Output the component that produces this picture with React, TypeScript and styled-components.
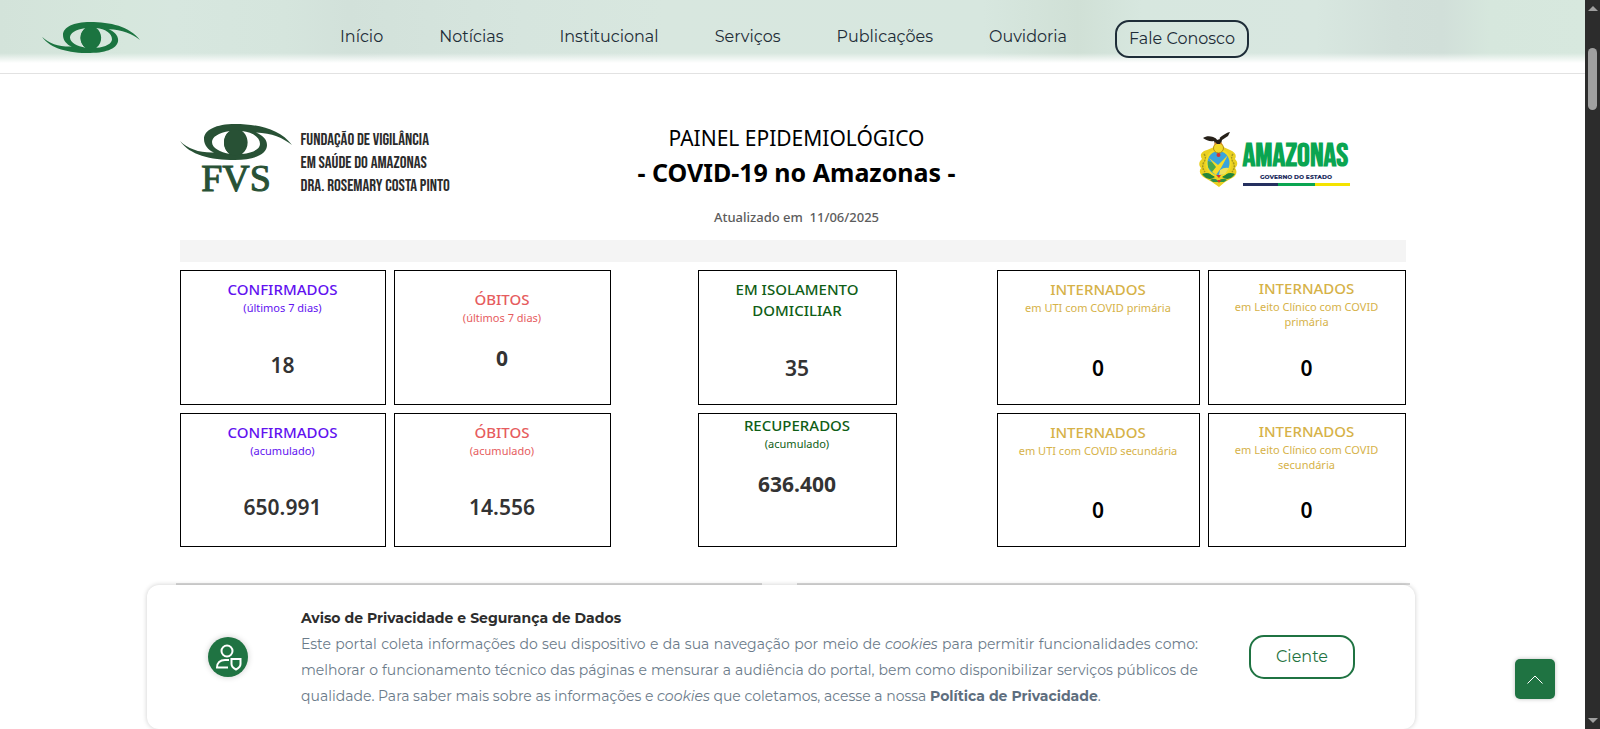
import React from "react";
import styled, { createGlobalStyle } from "styled-components";

const GlobalStyle = createGlobalStyle`
  *, *::before, *::after { box-sizing: border-box; }
  html, body { margin: 0; padding: 0; }
  body {
    background: #fff;
    font-family: Montserrat, Inter, sans-serif;
    overflow: hidden;
  }
  h1, h2, h3, p, ul { margin: 0; padding: 0; }
`;

const PANEL_FONT = '"Noto Sans", "Open Sans", sans-serif';
const NARROW_FONT = '"Bebas Neue", Oswald, "Roboto Condensed", "Liberation Sans Narrow", sans-serif';

const Screen = styled.div`
  display: flex;
  height: 100vh;
`;

const Page = styled.div`
  flex: 1;
  min-width: 0;
  position: relative;
  overflow: hidden;
`;

const TopBar = styled.header`
  display: flex;
  align-items: flex-start;
  height: 74px;
  padding: 0 42px;
  border-bottom: 1px solid #e2e2e2;
  background:
    linear-gradient(to bottom, transparent 53px, #fff 63px),
    linear-gradient(
      to right,
      #d3e3da 0,
      #d6e7dd 8%,
      #d7e7df 11%,
      #d5e5dd 18%,
      #d2e1da 22%,
      #d4e3dc 27%,
      #d6e5de 33%,
      #d8e7df 42%,
      #d7e7df 62%,
      #d0e0d6 68%,
      #d7e7df 72%,
      #d8e7e0 83%,
      #d2e0da 88%,
      #d1dfd9 91%,
      #d6e7dd 94%,
      #d7e8de 100%
    );
`;

const LogoLink = styled.a`
  display: block;
  margin-top: 22px;
  color: #1b7440;
  svg { display: block; }
`;

const Nav = styled.nav`
  margin-left: 200px;
`;

const NavList = styled.ul`
  display: flex;
  list-style: none;
  gap: 56px;
  margin-top: 20px;
`;

const NavLink = styled.a`
  display: block;
  color: #1e2d38;
  font-size: 16px;
  font-weight: 400;
  line-height: 34px;
  text-decoration: none;
  white-space: nowrap;
`;

const ContactLink = styled(NavLink)`
  margin-left: -8px;
  padding: 0 12px;
  border: 2px solid #1e2d38;
  border-radius: 14px;
`;

const Dashboard = styled.main`
  width: 1226px;
  max-width: calc(100% - 32px);
  margin: 0 auto;
`;

const PanelHeader = styled.div`
  display: grid;
  grid-template-columns: 1fr auto 1fr;
  align-items: start;
  height: 166px;
  padding-top: 50px;
`;

const Institution = styled.div`
  display: flex;
  gap: 9px;
`;

const InstitutionName = styled.p`
  margin-top: 5px;
  font-family: ${NARROW_FONT};
  font-size: 17px;
  line-height: 23px;
  color: #2b2b2b;
  white-space: nowrap;
`;

const Heading = styled.div`
  padding-left: 8px;
`;

const Title = styled.h1`
  text-align: center;
  font-family: ${PANEL_FONT};
  font-size: 25px;
  font-weight: 700;
  line-height: 38px;
  color: #000;
  white-space: nowrap;
`;

const Overline = styled.p`
  text-align: center;
  font-family: ${PANEL_FONT};
  font-size: 21px;
  line-height: 29px;
  color: #000;
`;

const Updated = styled.p`
  margin-top: 16px;
  text-align: center;
  font-family: ${PANEL_FONT};
  font-size: 13px;
  font-weight: 500;
  line-height: 20px;
  color: #5c5c5c;
  white-space: pre;
`;

const State = styled.div`
  display: flex;
  justify-self: end;
  gap: 5px;
  margin: 8px 56px 0 0;
`;

const StateText = styled.div`
  width: 107px;
  margin-top: 10px;
`;

const StateName = styled.p`
  font-family: ${NARROW_FONT};
  font-size: 32px;
  font-weight: 700;
  line-height: 30px;
  color: #0aa551;
`;

const StateLabel = styled.p`
  text-align: center;
  font-size: 6px;
  font-weight: 800;
  line-height: 10px;
  color: #25305f;
  white-space: nowrap;
`;

const StateStripe = styled.div`
  height: 3px;
  margin-top: 1px;
  background: linear-gradient(to right, #25305f 0 33%, #0aa551 33% 67%, #f4e300 67%);
`;

const Divider = styled.div`
  height: 22px;
  background: #f4f4f4;
`;

const Cards = styled.section`
  display: grid;
  grid-template-columns: 206fr 217fr 71fr 199fr 84fr 203fr 198fr;
  grid-template-rows: 135px 134px;
  gap: 8px;
  margin-top: 8px;
`;

const Card = styled.article<{ $column: number; $top: number; $bottom: number }>`
  grid-column: ${(p) => p.$column};
  display: flex;
  flex-direction: column;
  padding: ${(p) => p.$top}px 8px ${(p) => p.$bottom}px;
  border: 1px solid #000;
  font-family: ${PANEL_FONT};
  text-align: center;
`;

const CardTitle = styled.h2<{ $color: string }>`
  padding: 0 24px;
  font-size: 15px;
  font-weight: 500;
  line-height: 21px;
  color: ${(p) => p.$color};
`;

const CardNote = styled.p<{ $color: string }>`
  font-size: 11px;
  font-weight: 400;
  line-height: 15px;
  color: ${(p) => p.$color};
`;

const CardValue = styled.p<{ $color: string; $weight: number }>`
  margin-top: auto;
  font-size: 21px;
  font-weight: ${(p) => p.$weight};
  line-height: 30px;
  color: ${(p) => p.$color};
`;

const Charts = styled.section`
  display: grid;
  grid-template-columns: 586fr 613fr;
  gap: 35px;
  margin: 36px -4px 0;
`;

const ChartPanel = styled.div`
  height: 200px;
  border-top: 2px solid #d8d8d8;
`;

const Notice = styled.section`
  position: absolute;
  left: 147px;
  bottom: 0;
  width: 80%;
  height: 144px;
  display: flex;
  align-items: center;
  padding: 0 60px 0 61px;
  border-radius: 12px;
  background: #fff;
  box-shadow: 0 0 5px rgba(0, 0, 0, 0.2);
`;

const NoticeIcon = styled.div`
  flex: none;
  width: 40px;
  height: 40px;
  display: flex;
  align-items: center;
  justify-content: center;
  border-radius: 50%;
  background: #1f7342;
  box-shadow: 0 0 6px rgba(0, 0, 0, 0.2);
`;

const NoticeBody = styled.div`
  flex: 1;
  margin: 0 51px 0 53px;
`;

const NoticeTitle = styled.h3`
  font-size: 14px;
  font-weight: 700;
  line-height: 26px;
  color: #2d2d2d;
`;

const NoticeText = styled.p`
  font-size: 14px;
  font-weight: 400;
  line-height: 26px;
  text-align: justify;
  color: #6b7b8a;
  a { color: #5e6e7e; font-weight: 700; text-decoration: none; }
`;

const Accept = styled.button`
  flex: none;
  width: 106px;
  height: 44px;
  padding: 0 0 2px;
  border: 2px solid #1f7342;
  border-radius: 15px;
  background: #fff;
  color: #1f7342;
  font: 400 16px Montserrat, Inter, sans-serif;
`;

const BackToTop = styled.button`
  position: absolute;
  right: 30px;
  bottom: 30px;
  width: 40px;
  height: 40px;
  padding: 0;
  display: flex;
  align-items: center;
  justify-content: center;
  border: 0;
  border-radius: 5px;
  background: #1f7342;
  box-shadow: 0 0 4px rgba(0, 0, 0, 0.25);
`;

const ScrollTrack = styled.div`
  flex: none;
  width: 15px;
  display: flex;
  flex-direction: column;
  align-items: center;
  padding: 6px 0;
  background: #2c2c2c;
`;

const ScrollThumb = styled.div`
  width: 9px;
  height: 62px;
  margin-top: 37px;
  border-radius: 5px;
  background: #9f9f9f;
`;

const ScrollArrow = styled.span<{ $down?: boolean }>`
  border: 5px solid transparent;
  border-top: ${(p) => (p.$down ? "5px solid #9f9f9f" : "0")};
  border-bottom: ${(p) => (p.$down ? "0" : "5px solid #9f9f9f")};
  margin-top: ${(p) => (p.$down ? "auto" : "0")};
`;

/* The eye shape shared by both FVS logos, drawn in a 112 x 36 box. */
const EyeShape = () => (
  <>
    <path
      fillRule="evenodd"
      d="M0 17 C10 31 30 36 55 36 C75 36 87 30 87 21 C87 15 82 11 76 8.5 C92 9 103 14 112 21 C100 5 78 0 55 0 C36 0 24 6 24 15 C24 21 28 26 34 28.5 C20 29 8 25 0 17 Z M50 7 C38 9 32 13 32 18 C32 24 40 28 50 30 C42 25 42 12 50 7 Z M62 7 C72 8 80 13 80 20 C80 25 73 29 62 30 C70 24 69 12 62 7 Z"
    />
    <ellipse cx="55" cy="18.5" rx="11" ry="13" />
  </>
);

const Crest = () => (
  <svg width="39" height="56" viewBox="0 0 39 56" role="img" aria-label="Brasão do Amazonas">
    <path d="M8 18 C1 20 1 24 3 27 C-1 30 0 34 2 36 C-1 40 2 44 6 46 L13 50 L20 55 L26 50 L33 46 C37 44 39 40 36 36 C39 33 39 30 36 27 C38 23 36 20 31 18 L20 13 Z" fill="#ead022" />
    <path d="M5 22 q3 4 0 8 q-3 5 1 10 M34 22 q-3 4 0 8 q3 5 -1 10" fill="none" stroke="#a5991d" strokeWidth="1.500" strokeDasharray="2 1" />
    <path d="M3 42 q7 -3 13 3 q-7 5 -13 -3 M36 42 q-7 -3 -13 3 q7 5 13 -3" fill="#23853b" />
    <path d="M11 48 q5 -3 8 1 q5 -4 9 -1 l-3 2 -5 0 -6 0 Z" fill="#2f9146" />
    <ellipse cx="19.500" cy="31" rx="13" ry="14" fill="#f4dc22" />
    <ellipse cx="19.500" cy="31" rx="11" ry="12" fill="#3aa4dc" />
    <path d="M9 29 l6 2 3 5 -4 5 -5 -6 Z" fill="#4aa84c" />
    <path d="M10 26 L19 33 L29 23 L22 36 L17 43 L13 40 L17 35 Z" fill="#f6dc28" />
    <path d="M21 38 q4 -3 9 -2 l-4 6 -6 1 Z" fill="#f0e35c" />
    <circle cx="19.500" cy="16" r="5" fill="#f2d92a" stroke="#b39213" strokeWidth="1" />
    <circle cx="19.500" cy="23" r="2" fill="#d8322f" />
    <path d="M17 43 h5 l-2 3 Z M18 48 h4 l-2 3 Z" fill="#d8322f" />
    <path d="M4 6 C8 3 14 4 18 7 C22 6 25 1 31 0 L29 4 L26 6 L23 8 L22 12 L16 12 L15 9 C11 10 7 8 4 6 Z" fill="#262019" />
    <path d="M16 10 l-1 3 3 -1 M22 10 l2 3 -3 -1" fill="#e0902a" />
    <path d="M17 6 l3 -1 1 2 -3 1 Z" fill="#fff" />
  </svg>
);

const PURPLE = "#6212f0";
const RED = "#e65c5e";
const GREEN = "#0f5e16";
const GOLD = "#d6b248";

type CardData = {
  column: number;
  title: string;
  note?: string;
  value: string;
  color: string;
  valueColor?: string;
  weight?: number;
  top?: number;
  bottom?: number;
};

const cards: CardData[] = [
  { column: 1, title: "CONFIRMADOS", note: "(últimos 7 dias)", value: "18", color: PURPLE, bottom: 24 },
  { column: 2, title: "ÓBITOS", note: "(últimos 7 dias)", value: "0", color: RED, weight: 700, top: 18, bottom: 31 },
  { column: 4, title: "EM ISOLAMENTO DOMICILIAR", value: "35", color: GREEN },
  { column: 6, title: "INTERNADOS", note: "em UTI com COVID primária", value: "0", color: GOLD, valueColor: "#000" },
  { column: 7, title: "INTERNADOS", note: "em Leito Clínico com COVID primária", value: "0", color: GOLD, valueColor: "#000", top: 7 },
  { column: 1, title: "CONFIRMADOS", note: "(acumulado)", value: "650.991", color: PURPLE, bottom: 24 },
  { column: 2, title: "ÓBITOS", note: "(acumulado)", value: "14.556", color: RED, bottom: 24 },
  { column: 4, title: "RECUPERADOS", note: "(acumulado)", value: "636.400", color: GREEN, weight: 700, top: 1, bottom: 47 },
  { column: 6, title: "INTERNADOS", note: "em UTI com COVID secundária", value: "0", color: GOLD, valueColor: "#000" },
  { column: 7, title: "INTERNADOS", note: "em Leito Clínico com COVID secundária", value: "0", color: GOLD, valueColor: "#000", top: 7 },
];

const links = ["Início", "Notícias", "Institucional", "Serviços", "Publicações", "Ouvidoria"];

export default function App() {
  return (
    <>
      <GlobalStyle />
      <Screen>
        <Page>
          <TopBar>
            <LogoLink href="#" aria-label="FVS">
              <svg width="98" height="31" viewBox="0 0 112 36" preserveAspectRatio="none" fill="currentColor">
                <EyeShape />
              </svg>
            </LogoLink>
            <Nav>
              <NavList>
                {links.map((label) => (
                  <li key={label}>
                    <NavLink href="#">{label}</NavLink>
                  </li>
                ))}
                <li>
                  <ContactLink href="#">Fale Conosco</ContactLink>
                </li>
              </NavList>
            </Nav>
          </TopBar>

          <Dashboard>
            <PanelHeader>
              <Institution>
                <svg width="112" height="78" viewBox="0 0 112 78" fill="#285135" role="img" aria-label="FVS">
                  <EyeShape />
                  <text
                    x="56"
                    y="67"
                    textAnchor="middle"
                    fontFamily="Liberation Serif, serif"
                    fontSize="38"
                    stroke="#285135"
                    strokeWidth="1"
                  >
                    FVS
                  </text>
                </svg>
                <InstitutionName>
                  FUNDAÇÃO DE VIGILÂNCIA
                  <br />
                  EM SAÚDE DO AMAZONAS
                  <br />
                  DRA. ROSEMARY COSTA PINTO
                </InstitutionName>
              </Institution>
              <Heading>
                <Overline>PAINEL EPIDEMIOLÓGICO</Overline>
                <Title>- COVID-19 no Amazonas -</Title>
                <Updated>{"Atualizado em  11/06/2025"}</Updated>
              </Heading>
              <State>
                <Crest />
                <StateText>
                  <StateName>AMAZONAS</StateName>
                  <StateLabel>GOVERNO DO ESTADO</StateLabel>
                  <StateStripe />
                </StateText>
              </State>
            </PanelHeader>
            <Divider />
            <Cards>
              {cards.map((card, index) => (
                <Card key={index} $column={card.column} $top={card.top ?? 8} $bottom={card.bottom ?? 21}>
                  <CardTitle $color={card.color}>{card.title}</CardTitle>
                  {card.note && <CardNote $color={card.color}>{card.note}</CardNote>}
                  <CardValue $color={card.valueColor ?? "#333"} $weight={card.weight ?? 600}>
                    {card.value}
                  </CardValue>
                </Card>
              ))}
            </Cards>
            <Charts>
              <ChartPanel />
              <ChartPanel />
            </Charts>
          </Dashboard>

          <Notice aria-label="Aviso de Privacidade">
            <NoticeIcon>
              <svg width="28" height="28" viewBox="0 0 28 28" fill="none" stroke="#fff" strokeWidth="2">
                <circle cx="13" cy="8" r="5.500" />
                <path d="M15 17 H11 C6 17 3 20 3 24.500 H14" />
                <path d="M17.500 16 H26.500 V21 C26.500 23.500 25 25 22 26.500 C19 25 17.500 23.500 17.500 21 Z" />
              </svg>
            </NoticeIcon>
            <NoticeBody>
              <NoticeTitle>Aviso de Privacidade e Segurança de Dados</NoticeTitle>
              <NoticeText>
                Este portal coleta informações do seu dispositivo e da sua navegação por meio de <em>cookies</em> para
                permitir funcionalidades como: melhorar o funcionamento técnico das páginas e mensurar a audiência do
                portal, bem como disponibilizar serviços públicos de qualidade. Para saber mais sobre as informações e{" "}
                <em>cookies</em> que coletamos, acesse a nossa <a href="#">Política de Privacidade</a>.
              </NoticeText>
            </NoticeBody>
            <Accept type="button">Ciente</Accept>
          </Notice>

          <BackToTop type="button" aria-label="Voltar ao topo">
            <svg width="16" height="9" viewBox="0 0 16 9" fill="none" stroke="#fff" strokeWidth="1">
              <path d="M0.500 8.500 L8 1 L15.500 8.500" />
            </svg>
          </BackToTop>
        </Page>
        <ScrollTrack aria-hidden="true">
          <ScrollArrow />
          <ScrollThumb />
          <ScrollArrow $down />
        </ScrollTrack>
      </Screen>
    </>
  );
}
